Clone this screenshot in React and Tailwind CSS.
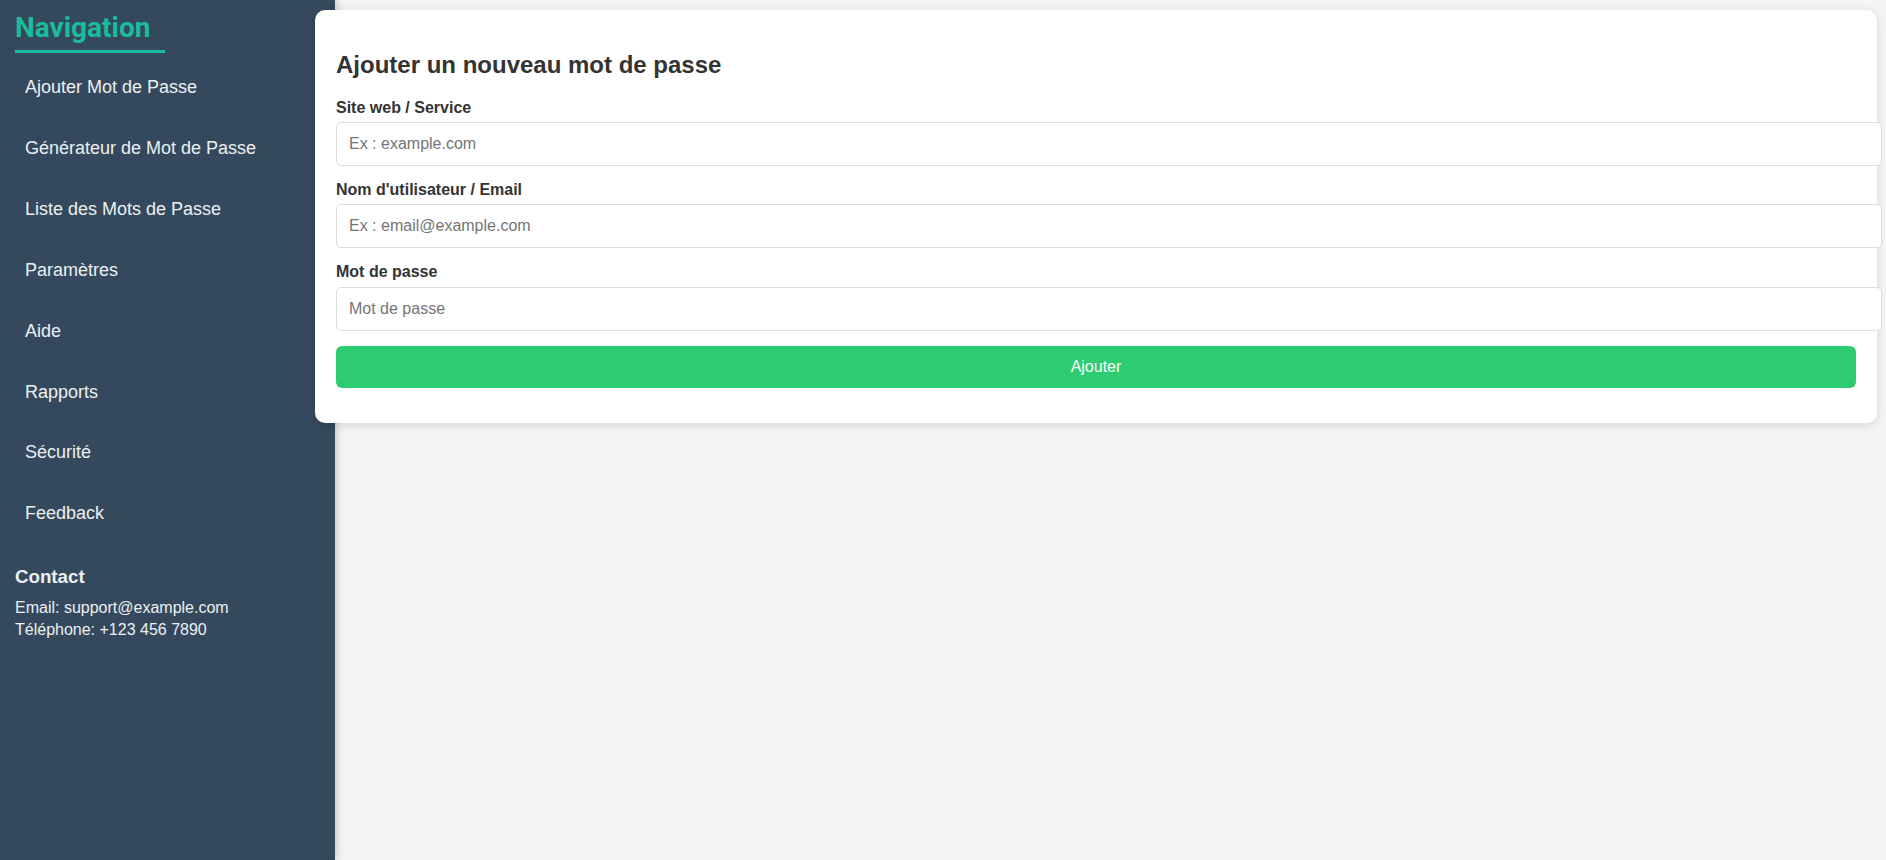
import React from "react";

const navItems = [
  "Ajouter Mot de Passe",
  "Générateur de Mot de Passe",
  "Liste des Mots de Passe",
  "Paramètres",
  "Aide",
  "Rapports",
  "Sécurité",
  "Feedback",
];

const fields = [
  { label: "Site web / Service", placeholder: "Ex : example.com", type: "text" },
  { label: "Nom d'utilisateur / Email", placeholder: "Ex : email@example.com", type: "text" },
  { label: "Mot de passe", placeholder: "Mot de passe", type: "password" },
];

export default function App() {
  return (
    <div
      className="flex min-h-screen bg-[#f4f4f4]"
      style={{ fontFamily: '"Liberation Sans", Arial, sans-serif' }}
    >
      <aside className="relative w-[335px] shrink-0 min-h-screen bg-[#34495e] px-[15px] pt-[11px] shadow-[2px_0_8px_rgba(0,0,0,0.18)]">
        <h2 className="m-0 inline-block w-[150px] border-b-[3px] border-[#1abc9c] pb-[6px] font-['Roboto',sans-serif] text-[28px] font-bold leading-[33px] text-[#1abc9c]">
          Navigation
        </h2>
        <ul className="mt-[14px] list-none p-0">
          {navItems.map((item) => (
            <li
              key={item}
              className="mb-[20px] px-[10px] py-[10px] text-[18px] leading-[20.9px] text-[#ecf0f1]"
            >
              {item}
            </li>
          ))}
        </ul>
        <h3 className="mt-[32px] text-[18.72px] font-bold leading-[21.5px] text-[#ecf0f1]">
          Contact
        </h3>
        <div className="mt-[9px] text-[16px] leading-[22px] text-[#ecf0f1]">
          <p>Email: support@example.com</p>
          <p>Téléphone: +123 456 7890</p>
        </div>
      </aside>
      <main className="flex-1 pt-[10px] pr-[9px]">
        <div className="relative -ml-5 rounded-[10px] bg-white px-[21px] pt-[20px] pb-[35px] shadow-[0_2px_10px_rgba(0,0,0,0.12)]">
          <h2 className="mt-[21px] mb-[20px] text-[24px] font-bold leading-[27.6px] text-[#333]">
            Ajouter un nouveau mot de passe
          </h2>
          <form onSubmit={(e) => e.preventDefault()}>
            {fields.map((f) => (
              <div key={f.label}>
                <label className="mb-[5px] block text-[16px] font-bold leading-[18.4px] text-[#333]">
                  {f.label}
                </label>
                <input
                  type={f.type}
                  placeholder={f.placeholder}
                  className="mb-[15px] block w-[calc(100%+26px)] rounded-[5px] border border-[#dddddd] bg-white px-[12px] py-[12px] text-[16px] leading-[18px] text-[#333] placeholder:text-[#757575] outline-none"
                />
              </div>
            ))}
            <button
              type="submit"
              className="block w-full rounded-[6px] bg-[#2ecc71] py-[12px] text-center text-[16px] leading-[18px] text-white"
            >
              Ajouter
            </button>
          </form>
        </div>
      </main>
    </div>
  );
}
